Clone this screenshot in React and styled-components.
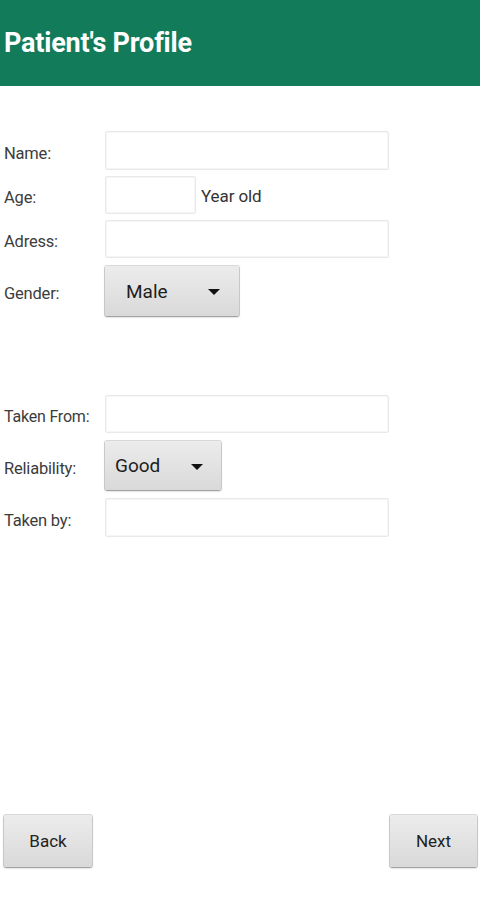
import React from "react";
import styled, { createGlobalStyle } from "styled-components";

const Global = createGlobalStyle`
  html, body { margin: 0; padding: 0; background: #fff; }
  body { font-family: Roboto, "Noto Sans", sans-serif; }
`;

const Page = styled.div`
  min-height: 900px;
  width: 483px;
  display: flex;
  flex-direction: column;
  box-sizing: border-box;
`;

const Header = styled.header`
  height: 86px;
  margin-right: 3px;
  background: #127b5a;
  display: flex;
  align-items: center;
  padding-left: 4px;
  padding-bottom: 1px;
  box-sizing: border-box;
`;

const Title = styled.h1`
  margin: 0;
  color: #fff;
  font-size: 27px;
  font-weight: 700;
  letter-spacing: -0.2px;
`;

const Section = styled.section`
  display: flex;
  flex-direction: column;
  gap: ${(p) => p.$gap}px;
  margin-top: ${(p) => p.$top}px;
`;

const Row = styled.div`
  display: flex;
  align-items: center;
  margin-top: ${(p) => p.$mt || 0}px;
`;

const Label = styled.label`
  width: 105px;
  flex-shrink: 0;
  box-sizing: border-box;
  padding-left: 4px;
  padding-top: 5px;
  color: #3c3c3c;
  font-size: ${(p) => p.$size || 16.5}px;
  letter-spacing: -0.2px;
  white-space: nowrap;
`;

const Input = styled.div`
  width: ${(p) => p.$w}px;
  height: ${(p) => p.$h || 39}px;
  flex-shrink: 0;
  box-sizing: border-box;
  border: 1px solid #e9e9e9;
  border-radius: 2px;
  box-shadow: inset 0 0 0 1px #f6f6f6;
  background: #fff;
`;

const Suffix = styled.span`
  color: #333;
  font-size: 17px;
  margin-left: 5px;
  padding-top: 2px;
  letter-spacing: -0.1px;
`;

const Spinner = styled.div`
  width: ${(p) => p.$w}px;
  height: ${(p) => p.$h}px;
  flex-shrink: 0;
  box-sizing: border-box;
  display: flex;
  align-items: center;
  padding-left: ${(p) => p.$pl}px;
  padding-right: ${(p) => p.$pr}px;
  justify-content: space-between;
  border-radius: 2px;
  background: linear-gradient(#ececec, #d9d9d9);
  box-shadow: 0 1px 2px rgba(0, 0, 0, 0.35), 0 0 0 1px #dcdcdc;
  color: #1e1e1e;
  font-size: 19px;
`;

const Caret = styled.span`
  width: 0;
  height: 0;
  border-left: 6px solid transparent;
  border-right: 6px solid transparent;
  border-top: 6px solid #111;
  margin-top: 2px;
`;

const Footer = styled.footer`
  margin-top: auto;
  display: flex;
  justify-content: space-between;
  padding: 0 6px 33px 4px;
`;

const NavButton = styled.button`
  width: ${(p) => p.$w}px;
  height: 52px;
  border: none;
  border-radius: 2px;
  background: linear-gradient(#ececec, #d9d9d9);
  box-shadow: 0 1px 2px rgba(0, 0, 0, 0.35), 0 0 0 1px #dcdcdc;
  font-family: Roboto, sans-serif;
  font-size: 17px;
  color: #222;
  padding: 0;
`;

export default function App() {
  return (
    <Page>
      <Global />
      <Header>
        <Title>Patient's Profile</Title>
      </Header>
      <Section $top={45} $gap={6}>
        <Row>
          <Label>Name:</Label>
          <Input $w={284} />
        </Row>
        <Row>
          <Label>Age:</Label>
          <Input $w={91} $h={38} />
          <Suffix>Year old</Suffix>
        </Row>
        <Row>
          <Label>Adress:</Label>
          <Input $w={284} $h={38} />
        </Row>
        <Row $mt={2}>
          <Label>Gender:</Label>
          <Spinner $w={134} $h={50} $pl={21} $pr={19}>
            <span>Male</span>
            <Caret />
          </Spinner>
        </Row>
      </Section>
      <Section $top={79} $gap={8}>
        <Row>
          <Label $size={16}>Taken From:</Label>
          <Input $w={284} $h={38} />
        </Row>
        <Row>
          <Label>Reliability:</Label>
          <Spinner $w={116} $h={49} $pl={10} $pr={18}>
            <span>Good</span>
            <Caret />
          </Spinner>
        </Row>
        <Row>
          <Label>Taken by:</Label>
          <Input $w={284} />
        </Row>
      </Section>
      <Footer>
        <NavButton $w={88}>Back</NavButton>
        <NavButton $w={87}>Next</NavButton>
      </Footer>
    </Page>
  );
}
